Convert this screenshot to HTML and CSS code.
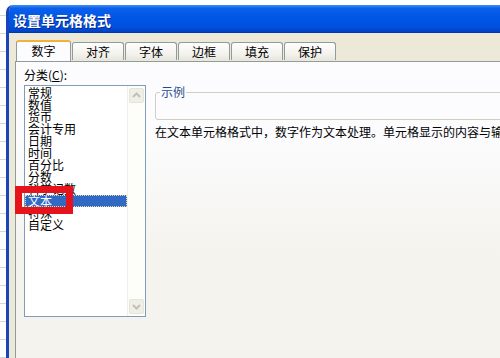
FILE: index.html
```html
<!DOCTYPE html>
<html lang="zh-CN">
<head>
  <meta charset="UTF-8">
  <meta name="viewport" content="width=device-width, initial-scale=1.0">
  <title>设置单元格格式</title>
  <link rel="stylesheet" href="styles.css">
</head>
<body>

  <div class="window">
    <div class="titlebar">设置单元格格式</div>
    <div class="face">
      <div class="tabs">
        <div class="tab active">数字</div>
        <div class="tab">对齐</div>
        <div class="tab">字体</div>
        <div class="tab">边框</div>
        <div class="tab">填充</div>
        <div class="tab">保护</div>
      </div>

      <div class="panel">
        <div class="category">
          <div class="label">分类(<u>C</u>):</div>
          <div class="listbox">
            <ul class="items">
              <li>常规</li>
              <li>数值</li>
              <li>货币</li>
              <li>会计专用</li>
              <li>日期</li>
              <li>时间</li>
              <li>百分比</li>
              <li>分数</li>
              <li>科学记数</li>
              <li class="selected">文本</li>
              <li>特殊</li>
              <li>自定义</li>
            </ul>
            <div class="scrollbar">
              <div class="sb-btn">
                <svg width="15" height="15" viewBox="0 0 15 15"><polyline points="4,9 7.5,5.5 11,9" fill="none" stroke="#c2c1b4" stroke-width="2"/></svg>
              </div>
              <div class="sb-track"></div>
              <div class="sb-btn">
                <svg width="15" height="15" viewBox="0 0 15 15"><polyline points="4,6 7.5,9.5 11,6" fill="none" stroke="#c2c1b4" stroke-width="2"/></svg>
              </div>
            </div>
          </div>
        </div>

        <div class="detail">
          <fieldset class="sample">
            <legend>示例</legend>
          </fieldset>
          <p class="desc">在文本单元格格式中，数字作为文本处理。单元格显示的内容与输入的内容完全一致。</p>
        </div>
      </div>
    </div>
  </div>

  <div class="marker"></div>

</body>
</html>
```

FILE: styles.css
```css
body {
  margin: 0;
  overflow: hidden;
  height: 358px;
  background-color: #fff;
  background-image: repeating-linear-gradient(to bottom, transparent 0 15px, #d6d6d6 15px 16px, transparent 16px 18px);
  font-family: "Noto Sans CJK SC", "DejaVu Sans", sans-serif;
  font-size: 12px;
  color: #000;
}

.window {
  margin: 5px 0 0 6px;
  height: 353px;
  border-left: 3px solid #1a44b8;
  border-top-left-radius: 7px;
  background: #ece9d8;
  overflow: hidden;
}

.titlebar {
  height: 28px;
  box-sizing: border-box;
  padding: 8px 0 0 4px;
  background: linear-gradient(#3d8ff8 0, #0b5fea 12%, #0056e6 45%, #0050dd 80%, #0040c4 96%, #00329e 100%);
  color: #fff;
  font-weight: bold;
  font-size: 14px;
  line-height: 14px;
  text-shadow: 1px 1px #0a2a8a;
}

.face {
  padding: 7px 0 0 6px;
}

.tabs {
  display: flex;
  align-items: flex-end;
  gap: 1px;
  height: 21px;
  padding-left: 1px;
}

.tab {
  width: 52px;
  height: 18px;
  margin-bottom: 1px;
  box-sizing: border-box;
  border: 1px solid #919b9c;
  border-bottom: none;
  border-radius: 3px 3px 0 0;
  background: linear-gradient(#fefefe, #f2f1eb 70%, #e6e5de);
  text-align: center;
  line-height: 17px;
}

.tab.active {
  position: relative;
  z-index: 1;
  width: 55px;
  height: 21px;
  margin-bottom: 0;
  border-top: 2px solid #f2b03e;
  background: #fcfcfe;
  line-height: 16px;
  padding-top: 1px;
}

.panel {
  display: flex;
  gap: 9px;
  height: 300px;
  overflow: hidden;
  border-top: 1px solid #919b9c;
  border-left: 1px solid #919b9c;
  padding: 6px 0 0 8px;
  background: linear-gradient(#fcfcfe 0, #fcfcfe 70px, #f4f3ee 190px);
}

.category {
  width: 122px;
  flex: none;
}

.label {
  height: 14px;
  line-height: 14px;
  margin-bottom: 3px;
}

.listbox {
  display: flex;
  height: 232px;
  box-sizing: border-box;
  border: 1px solid #7f9db9;
  background: #fff;
}

.items {
  flex: 1;
  margin: 0;
  padding: 1px 0 0;
  list-style: none;
}

.items li {
  height: 12px;
  line-height: 12px;
  padding-left: 3px;
  white-space: nowrap;
}

.items li.selected {
  background: #316ac5;
  color: #fff;
  outline: 1px dotted #e8d9a0;
  outline-offset: -1px;
}

.scrollbar {
  display: flex;
  flex-direction: column;
  width: 18px;
  box-sizing: border-box;
  padding: 2px 1px 2px 1px;
  background: #fdfdfa;
  border-left: 1px solid #f0efe8;
}

.sb-btn {
  width: 15px;
  height: 15px;
  box-sizing: border-box;
  border: 1px solid #e6e5dc;
  border-radius: 2px;
  background: #efeee7;
}

.sb-btn svg {
  display: block;
  margin: -1px;
}

.sb-track {
  flex: 1;
}

.detail {
  flex: 1;
  min-width: 0;
  padding-top: 18px;
}

.sample {
  margin: 0 -20px 0 0;
  padding: 0 4px;
  height: 34px;
  box-sizing: border-box;
  border: 1px solid #d0d0bf;
  border-radius: 3px;
}

.sample legend {
  padding: 0 1px;
  line-height: 12px;
  color: #1d4f8e;
}

.desc {
  margin: 6px 0 0;
  line-height: 12px;
  white-space: nowrap;
}

.marker {
  position: absolute;
  left: 15px;
  top: 186px;
  width: 58px;
  height: 28px;
  box-sizing: border-box;
  border: 7px solid #e5131b;
}
```
